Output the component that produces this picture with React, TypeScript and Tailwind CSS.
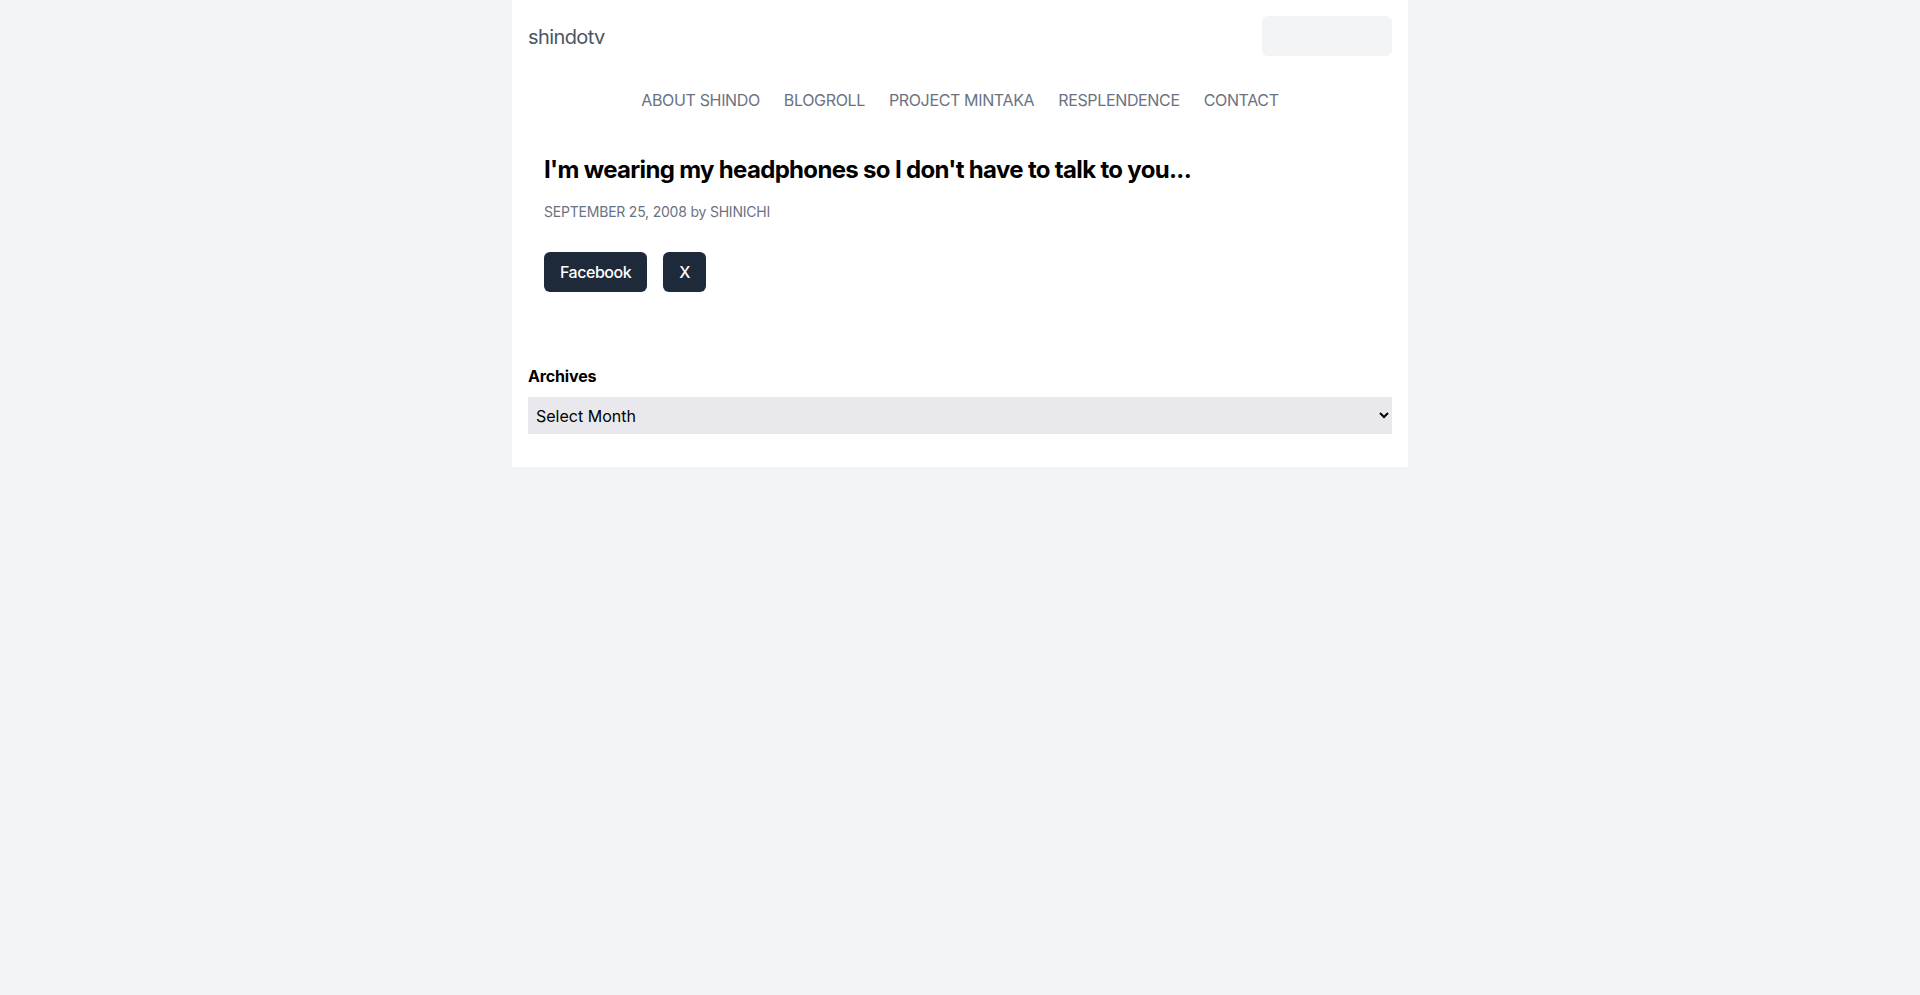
import { useState } from "react";

const navLinks = [
  "ABOUT SHINDO",
  "BLOGROLL",
  "PROJECT MINTAKA",
  "RESPLENDENCE",
  "CONTACT",
];

const App = () => {
  const [month, setMonth] = useState("");

  return (
    <div className="min-h-screen bg-gray-100 font-['Inter',sans-serif]">
      <div className="mx-auto max-w-4xl bg-white px-4 pt-4 pb-[33px]">
        {/* Cabecera */}
        <header className="flex h-10 items-center justify-between">
          <a href="#" className="pt-0.5 text-xl tracking-[-0.03em] text-gray-600">
            shindotv
          </a>
          <input
            type="text"
            aria-label="Search"
            className="h-10 w-[130px] rounded-md bg-gray-100 px-3 text-sm outline-none"
          />
        </header>

        {/* Menú */}
        <nav className="mt-8 flex justify-center gap-6">
          {navLinks.map((link) => (
            <a
              key={link}
              href="#"
              className="text-base leading-6 tracking-[-0.022em] text-gray-500"
            >
              {link}
            </a>
          ))}
        </nav>

        {/* Entrada */}
        <article className="px-4 pt-10">
          <h1 className="pt-0.5 text-2xl font-bold tracking-[-0.028em] text-black">
            I'm wearing my headphones so I don't have to talk to you...
          </h1>
          <p className="mt-4 text-sm tracking-[-0.015em] text-gray-500">
            SEPTEMBER 25, 2008 by SHINICHI
          </p>
          <div className="mt-[30px] flex gap-4">
            <button className="h-10 rounded-md bg-gray-800 px-4 text-base font-medium tracking-[-0.03em] text-white">
              Facebook
            </button>
            <button className="h-10 rounded-md bg-gray-800 px-4 text-base font-medium text-white">
              X
            </button>
          </div>
        </article>

        {/* Archivo */}
        <aside className="mt-[72px]">
          <h2 className="mb-[9px] text-base font-bold tracking-[-0.01em] text-black">
            Archives
          </h2>
          <select
            value={month}
            onChange={(e) => setMonth(e.target.value)}
            className="h-[37px] w-full bg-[#e9e9ed] px-1 text-base text-black"
          >
            <option value="">Select Month</option>
            <option value="2008-09">September 2008</option>
          </select>
        </aside>
      </div>
    </div>
  );
};

export default App;
